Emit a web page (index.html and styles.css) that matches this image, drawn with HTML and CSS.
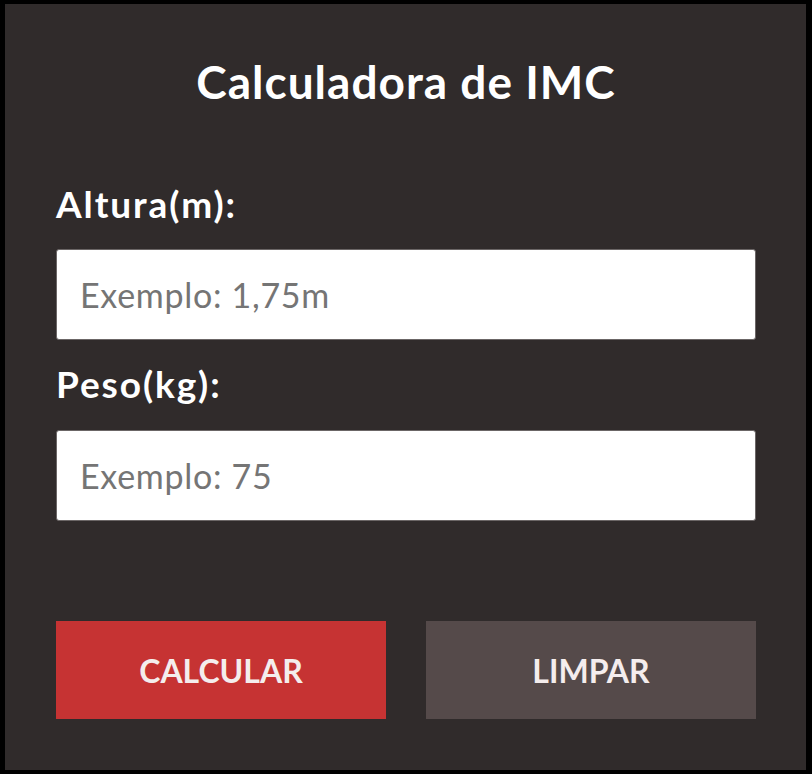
FILE: index.html
```html
<!DOCTYPE html>
<html lang="pt-BR">
<head>
<meta charset="utf-8">
<title>Calculadora de IMC</title>
<link rel="stylesheet" href="styles.css">
</head>
<body>
<main class="panel">
  <h1 class="title">Calculadora de IMC</h1>
  <form class="form">
    <label class="label" for="altura">Altura(m):</label>
    <input class="input" id="altura" type="text" placeholder="Exemplo: 1,75m">
    <label class="label label-second" for="peso">Peso(kg):</label>
    <input class="input" id="peso" type="text" placeholder="Exemplo: 75">
    <div class="actions">
      <button type="button" class="btn btn-primary">CALCULAR</button>
      <button type="button" class="btn btn-secondary">LIMPAR</button>
    </div>
  </form>
</main>
</body>
</html>
```

FILE: styles.css
```css
html, body {
  margin: 0;
  padding: 0;
  background: #000;
}
body {
  padding: 4px 6px 4px 5px;
  font-family: Lato, "Open Sans", sans-serif;
}
.panel {
  box-sizing: border-box;
  height: 766px;
  background: #302b2b;
  padding: 0 50px 0 51px;
  display: flex;
  flex-direction: column;
}
.title {
  margin: 50px 0 0;
  text-align: center;
  font-size: 46px;
  font-weight: 700;
  letter-spacing: 1px;
  line-height: 56px;
  color: #fff;
}
.form {
  display: flex;
  flex-direction: column;
  margin-top: 72px;
}
.label {
  font-size: 37px;
  font-weight: 700;
  letter-spacing: 1.9px;
  line-height: 44px;
  color: #fff;
  margin-bottom: 23px;
}
.label-second {
  margin-top: 22px;
  margin-bottom: 24px;
}
.input {
  box-sizing: border-box;
  height: 91px;
  width: 100%;
  margin: 0;
  border: 1px solid #6b6666;
  border-radius: 3px;
  background: #fff;
  padding: 0 23px;
  font-family: Lato, "Open Sans", sans-serif;
  font-size: 34px;
  letter-spacing: 0.7px;
  color: #222;
}
.input::placeholder {
  color: #757575;
}
.actions {
  display: flex;
  justify-content: space-between;
  margin-top: 100px;
}
.btn {
  width: 330px;
  height: 98px;
  border: none;
  border-radius: 0;
  font-family: Lato, "Open Sans", sans-serif;
  font-size: 32px;
  font-weight: 700;
  color: #f4eded;
  cursor: pointer;
}
.btn-primary {
  background: #c63333;
}
.btn-secondary {
  background: #554a4a;
}
```
